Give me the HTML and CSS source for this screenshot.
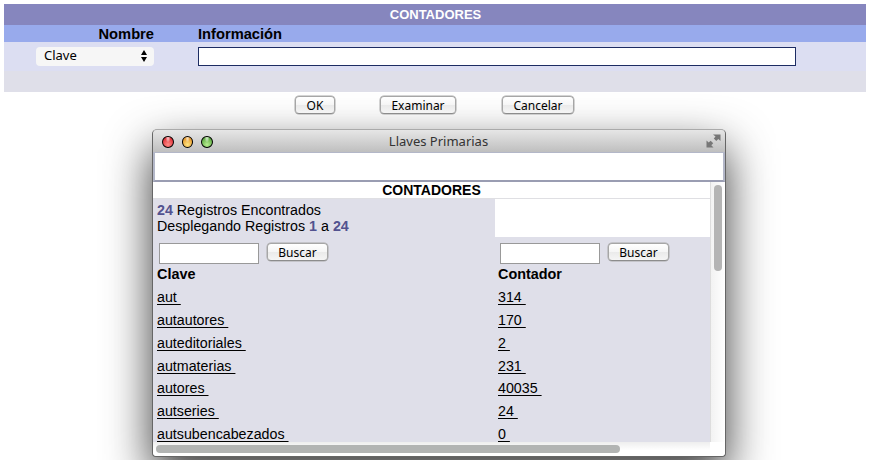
FILE: index.html
```html
<!DOCTYPE html>
<html lang="es">
<head>
<meta charset="utf-8">
<title>Contadores</title>
<link rel="stylesheet" href="styles.css">
</head>
<body>
<main class="form">
  <h1 class="form-title">CONTADORES</h1>
  <div class="form-head"><span class="col-name">Nombre</span><span>Información</span></div>
  <div class="form-row">
    <div class="col-name">
      <div class="select"><span>Clave</span>
        <svg width="6" height="12" viewBox="0 0 6 12"><path d="M3 0 6 5H0ZM0 7H6L3 12Z"/></svg>
      </div>
    </div>
    <div class="info-input"></div>
  </div>
  <div class="form-foot"></div>
</main>
<div class="actions">
  <button class="btn ok">OK</button>
  <button class="btn examine">Examinar</button>
  <button class="btn cancel">Cancelar</button>
</div>
<section class="window">
  <header class="titlebar">
    <div class="lights"><i class="red"></i><i class="yellow"></i><i class="green"></i></div>
    <span class="window-title">Llaves Primarias</span>
    <svg class="expand" width="15" height="14" viewBox="0 0 15 14"><path d="M7 .5H14.500V7L12.300 5 10.300 7 7.800 4.500 9.500 2.600ZM.5 6.500 2.700 8.600 4.700 6.800 7.200 9.200 5.300 11.200 7.500 13.500H.5Z"/></svg>
  </header>
  <div class="toolbar"></div>
  <div class="view">
    <div class="content">
      <h2 class="list-title">CONTADORES</h2>
      <div class="summary">
        <p><b>24</b> Registros Encontrados<br><span class="range">Desplegando Registros <b>1</b> a <b>24</b></span></p>
        <div class="blank"></div>
      </div>
      <div class="columns">
        <div class="column">
          <div class="search"><div class="field"></div><button class="btn">Buscar</button></div>
          <h3>Clave</h3>
          <ul>
            <li><a>aut&nbsp;</a></li><li><a>autautores&nbsp;</a></li><li><a>auteditoriales&nbsp;</a></li><li><a>autmaterias&nbsp;</a></li><li><a>autores&nbsp;</a></li><li><a>autseries&nbsp;</a></li><li><a>autsubencabezados&nbsp;</a></li>
          </ul>
        </div>
        <div class="column">
          <div class="search"><div class="field"></div><button class="btn">Buscar</button></div>
          <h3>Contador</h3>
          <ul>
            <li><a>314&nbsp;</a></li><li><a>170&nbsp;</a></li><li><a>2&nbsp;</a></li><li><a>231&nbsp;</a></li><li><a>40035&nbsp;</a></li><li><a>24&nbsp;</a></li><li><a>0&nbsp;</a></li>
          </ul>
        </div>
      </div>
    </div>
    <div class="vscroll"><div class="vthumb"></div></div>
    <div class="hscroll"><div class="hthumb"></div></div>
    <div class="corner"></div>
  </div>
</section>
</body>
</html>
```
FILE: styles.css
```css
* { box-sizing: border-box; }
html { height: 460px; overflow: hidden; }
body { margin: 0; padding: 4px 7px 0 4px; height: 460px; overflow: hidden; background: #fff; color: #000; font-family: "Liberation Sans", Arial, sans-serif; font-size: 14px; }
h1, h2, h3, p, ul { margin: 0; padding: 0; }

.form { position: relative; z-index: 2; }
.form-title { height: 21px; line-height: 21px; padding-left: 1px; text-align: center; font-size: 13px; color: #fff; background: #8686be; }
.form-head, .form-row { display: grid; grid-template-columns: 150px 1fr; column-gap: 44px; }
.form-head { height: 17px; line-height: 18px; font-size: 14.700px; font-weight: bold; background: #98aaec; }
.col-name { display: flex; justify-content: flex-end; }
.form-row { height: 29px; padding-top: 5px; background: #dcdef2; }
.select { display: flex; align-items: center; justify-content: space-between; width: 118px; height: 19px; padding: 0 7px 0 8px; border-radius: 4px; background: #f6f6f6; font: 13px/17px "Noto Sans", sans-serif; }
.select span { padding-bottom: 2px; }
.select svg { margin-bottom: 1px; }
.info-input { width: 598px; height: 19px; background: #fff; border: 1px solid #1d2c63; }
.form-foot { height: 21px; background: #dfdfe9; }

.actions { position: relative; z-index: 2; display: flex; height: 37px; padding: 4px 0 0 291px; }
.btn { height: 18px; padding: 1px 0 0; line-height: 16px; text-align: center; font-family: "Noto Sans", sans-serif; font-size: 12px; color: #000; border: 1px solid #a6a6a6; border-bottom-color: #8c8c8c; border-radius: 4px; background: linear-gradient(#fff, #f5f5f5 50%, #eaeaea 51%, #f5f5f5); box-shadow: 0 0 0 .5px #aaa; }
.ok { width: 40px; }
.examine { width: 76px; margin-left: 45px; }
.cancel { width: 72px; margin-left: 46px; }

.window { position: relative; z-index: 1; width: 574px; height: 328px; margin-left: 148px; border: 1px solid #666; border-top-color: #aaa; border-radius: 5px 5px 4px 4px; background: #b9b9b9; box-shadow: 0 19px 46px rgba(0, 0, 0, .78); }
.titlebar { display: grid; grid-template-columns: 60px 1fr 60px; align-items: center; height: 22px; border-radius: 4px 4px 0 0; background: linear-gradient(#e6e6e6, #bfbfbf); }
.lights { display: flex; gap: 8px; padding: 1px 0 0 9px; }
.lights i { width: 12px; height: 12px; border-radius: 50%; border: 1px solid; }
.red { border-color: #993137; background: radial-gradient(ellipse at 50% 10%, #fff9 0 10%, transparent 35%), radial-gradient(circle at 50% 75%, #ff8b86, #e0363d 70%); }
.yellow { border-color: #9b6220; background: radial-gradient(ellipse at 50% 10%, #fff9 0 10%, transparent 35%), radial-gradient(circle at 50% 75%, #ffe582, #e79c2f 70%); }
.green { border-color: #487638; background: radial-gradient(ellipse at 50% 10%, #fff9 0 10%, transparent 35%), radial-gradient(circle at 50% 75%, #b8ee91, #62ad46 70%); }
.window-title { padding-right: 1px; text-align: center; font: 13px/22px "Noto Sans", sans-serif; color: #333; }
.expand { justify-self: end; margin-right: 4px; fill: #777; }
.toolbar { height: 30px; background: #fff; border: 1px solid #b3b7c8; border-width: 1px 2px 2px; border-bottom-color: #9a9db2; }

.view { display: grid; grid-template-columns: 557px 15px; grid-template-rows: 260px 14px; border-radius: 0 0 4px 4px; overflow: hidden; background: #fff; }
.content { overflow: hidden; background: #dfdfe9; }
.list-title { height: 17px; line-height: 17px; text-align: center; font-size: 14px; background: #fff; border-bottom: 1px solid #dfdfe3; }
.summary { display: grid; grid-template-columns: 342px 215px; height: 38px; }
.summary p { padding: 3px 0 0 4px; font-size: 14.250px; line-height: 16px; white-space: nowrap; }
.summary b { color: #52528f; }
.blank { background: #fff; }
.columns { display: grid; grid-template-columns: 341px 216px; }
.column { padding: 6px 0 0 4px; }
.search { display: flex; gap: 8px; padding-left: 2px; height: 23px; }
.field { width: 100px; height: 21px; border: 1px solid #999; background: #fff; }
.search .btn { width: 61px; height: 18px; }
h3 { font-size: 14.400px; line-height: 17px; }
ul { list-style: none; padding-top: 3px; font-size: 14.250px; }
li { height: 22.850px; line-height: 23px; white-space: nowrap; }
a { text-decoration: underline; text-decoration-thickness: 1px; text-underline-offset: 2px; }

.vscroll { padding: 3px 3px 0; border-left: 1px solid #ddd; background: linear-gradient(90deg, #f2f2f2, #fff); }
.vthumb { width: 8px; height: 86px; border-radius: 4px; background: #b4b4b4; }
.hscroll { padding: 3px 0 0 3px; background: linear-gradient(#eee, #fff 60%); }
.hthumb { width: 464px; height: 8px; border-radius: 4px; background: #b2b4b3; }
.corner { background: #fff; }
```
